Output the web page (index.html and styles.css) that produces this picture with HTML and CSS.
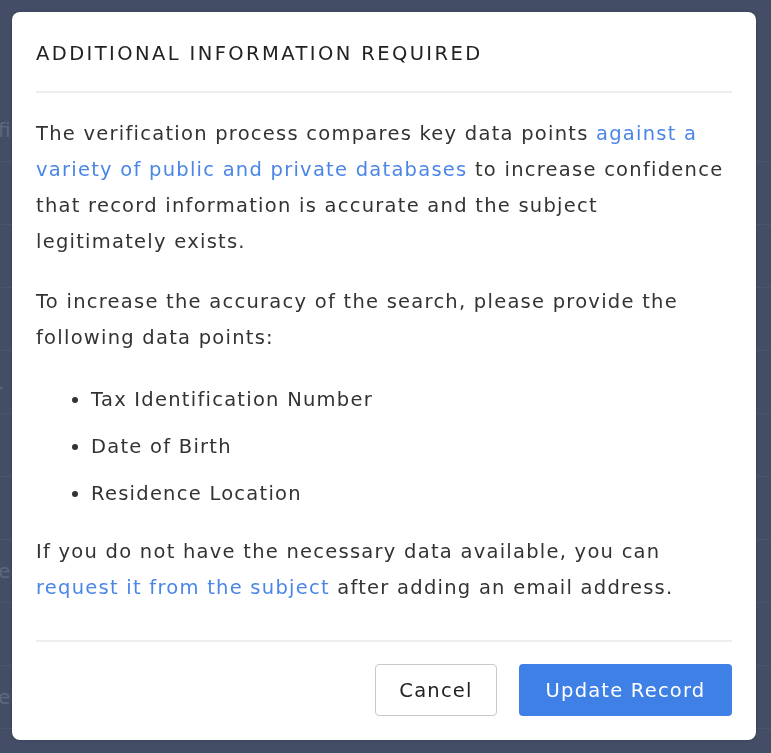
FILE: index.html
```html
<!DOCTYPE html>
<html lang="en">
<head>
    <meta charset="UTF-8">
    <meta name="viewport" content="width=device-width, initial-scale=1.0">
    <title>Additional Information Required</title>
    <link rel="stylesheet" href="styles.css">
</head>
<body>
    <!-- page behind the overlay -->
    <div class="page">
        <div class="row">fi</div>
        <div class="row"></div>
        <div class="row"></div>
        <div class="row"></div>
        <div class="row">.</div>
        <div class="row"></div>
        <div class="row"></div>
        <div class="row">e</div>
        <div class="row"></div>
        <div class="row">e</div>
    </div>

    <div class="overlay">
        <div class="modal">
            <h2 class="modal-title">Additional Information Required</h2>

            <div class="modal-body">
                <p>The verification process compares key data points <a href="#">against a variety of public and private databases</a> to increase confidence that record information is accurate and the subject legitimately exists.</p>
                <p>To increase the accuracy of the search, please provide the following data points:</p>
                <ul>
                    <li>Tax Identification Number</li>
                    <li>Date of Birth</li>
                    <li>Residence Location</li>
                </ul>
                <p>If you do not have the necessary data available, you can <a href="#">request it from the subject</a> after adding an email address.</p>
            </div>

            <div class="modal-footer">
                <button class="cancel">Cancel</button>
                <button class="submit">Update Record</button>
            </div>
        </div>
    </div>
</body>
</html>
```

FILE: styles.css
```css
body {
    font-family: 'DejaVu Sans', sans-serif;
    margin: 0;
    padding: 0;
    background-color: #434e66;
    color: #333;
}

.page {
    padding-top: 99px;
}

.row {
    height: 62px;
    line-height: 62px;
    border-bottom: 1px solid #4a556d;
    color: #5c6780;
    font-size: 20px;
    text-indent: -2px;
}

.overlay {
    position: fixed;
    top: 0;
    left: 0;
    right: 0;
    bottom: 0;
    padding: 12px 15px 13px 12px;
}

.modal {
    background-color: white;
    border-radius: 8px;
    box-shadow: 0 0 3px rgba(0, 0, 0, 0.25);
    padding: 0 24px;
    height: 100%;
    box-sizing: border-box;
    display: flex;
    flex-direction: column;
}

.modal-title {
    margin: 0;
    padding: 30px 0 26px 0;
    font-size: 19.5px;
    font-weight: normal;
    letter-spacing: 2.4px;
    text-transform: uppercase;
    color: #222;
    border-bottom: 2px solid #eceef2;
}

.modal-body {
    flex: 1;
    padding-top: 23px;
    font-size: 19.5px;
    letter-spacing: 1.25px;
    line-height: 36px;
    border-bottom: 2px solid #eceef2;
}

.modal-body p {
    margin: 0 0 24px 0;
}

.modal-body a {
    color: #4a86e8;
    text-decoration: none;
}

.modal-body ul {
    margin: 26px 0 22px 0;
    padding-left: 55px;
}

.modal-body li {
    margin-bottom: 11px;
}

.modal-footer {
    display: flex;
    justify-content: flex-end;
    gap: 22px;
    padding: 22px 0 24px 0;
}

.modal-footer button {
    font-family: 'DejaVu Sans', sans-serif;
    font-size: 19.5px;
    letter-spacing: 1.2px;
    height: 52px;
    border-radius: 4px;
    cursor: pointer;
}

.modal-footer .cancel {
    width: 122px;
    background-color: white;
    border: 1px solid #c8c8c8;
    color: #222;
}

.modal-footer .submit {
    width: 213px;
    background-color: #3f80e6;
    border: none;
    color: white;
}
```
